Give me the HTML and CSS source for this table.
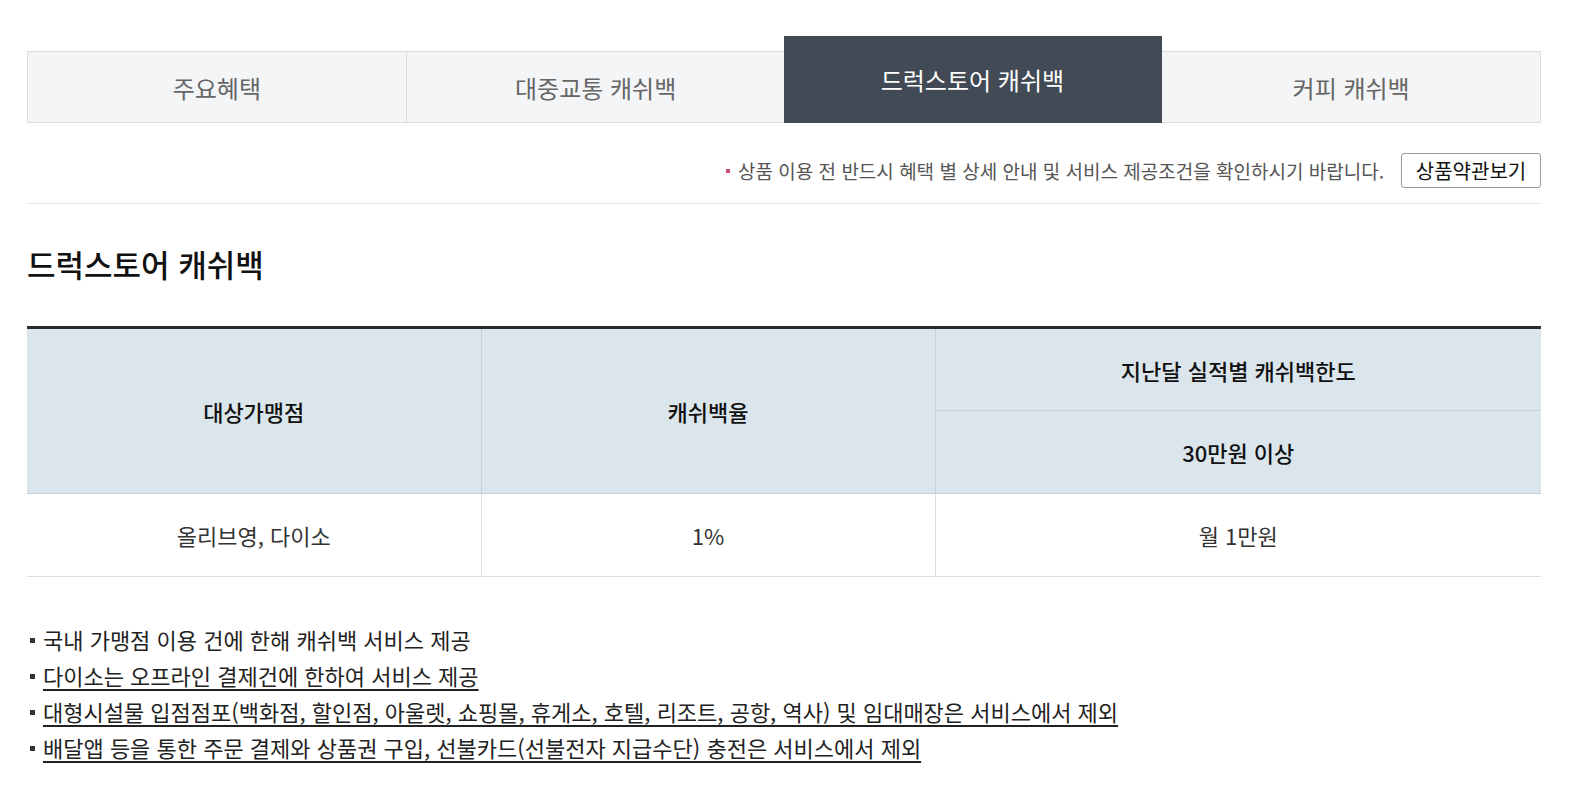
FILE: index.html
```html
<!DOCTYPE html>
<html lang="ko">
<head>
<meta charset="utf-8">
<title>드럭스토어 캐쉬백</title>
<link rel="stylesheet" href="styles.css">
</head>
<body>
<div class="wrap">
  <ul class="tabs">
    <li class="tab">주요혜택</li>
    <li class="tab">대중교통 캐쉬백</li>
    <li class="tab active">드럭스토어 캐쉬백</li>
    <li class="tab">커피 캐쉬백</li>
  </ul>

  <div class="notice-row">
    <p class="notice"><span class="dot"></span>상품 이용 전 반드시 혜택 별 상세 안내 및 서비스 제공조건을 확인하시기 바랍니다.</p>
    <button class="terms-btn" type="button">상품약관보기</button>
  </div>

  <h2 class="title">드럭스토어 캐쉬백</h2>

  <table class="benefit">
    <colgroup>
      <col class="c1"><col class="c2"><col class="c3">
    </colgroup>
    <thead>
      <tr>
        <th rowspan="2">대상가맹점</th>
        <th rowspan="2">캐쉬백율</th>
        <th>지난달 실적별 캐쉬백한도</th>
      </tr>
      <tr>
        <th>30만원 이상</th>
      </tr>
    </thead>
    <tbody>
      <tr>
        <td>올리브영, 다이소</td>
        <td>1%</td>
        <td>월 1만원</td>
      </tr>
    </tbody>
  </table>

  <ul class="notes">
    <li>국내 가맹점 이용 건에 한해 캐쉬백 서비스 제공</li>
    <li><u>다이소는 오프라인 결제건에 한하여 서비스 제공</u></li>
    <li><u>대형시설물 입점점포(백화점, 할인점, 아울렛, 쇼핑몰, 휴게소, 호텔, 리조트, 공항, 역사) 및 임대매장은 서비스에서 제외</u></li>
    <li><u>배달앱 등을 통한 주문 결제와 상품권 구입, 선불카드(선불전자 지급수단) 충전은 서비스에서 제외</u></li>
  </ul>
</div>
</body>
</html>
```

FILE: styles.css
```css
* { box-sizing: border-box; }
html, body { margin: 0; padding: 0; background: #fff; }
body {
  font-family: "Noto Sans CJK KR", "Noto Sans", sans-serif;
  color: #222;
}
.wrap {
  padding: 36px 28px 0 27px;
}
.tabs {
  list-style: none;
  margin: 0;
  padding: 0;
  display: flex;
  align-items: flex-end;
}
.tab {
  flex: 1 1 0;
  height: 72px;
  display: flex;
  align-items: center;
  justify-content: center;
  background: #f4f5f7;
  border: 1px solid #dcdcdc;
  border-left: none;
  font-size: 24px;
  color: #666;
}
.tab:first-child { border-left: 1px solid #dcdcdc; }
.tab.active {
  height: 87px;
  margin-left: -2px;
  background: #414a55;
  border-color: #414a55;
  color: #fff;
}
.notice-row {
  display: flex;
  justify-content: flex-end;
  align-items: center;
  gap: 17px;
  margin-top: 30px;
  padding-bottom: 15px;
  border-bottom: 1px solid #e3e3e3;
}
.notice {
  margin: 0;
  font-size: 19px;
  color: #555;
  display: flex;
  align-items: center;
}
.dot {
  width: 4px;
  height: 4px;
  background: #c9506c;
  margin-right: 8px;
}
.terms-btn {
  height: 35px;
  padding: 0;
  background: #fff;
  border: 1px solid #9a9a9a;
  border-radius: 3px;
  font-family: inherit;
  font-size: 20px;
  color: #111;
  width: 140px;
}
.title {
  margin: 40px 0 0;
  font-size: 31px;
  line-height: 40px;
  font-weight: 500;
  color: #111;
}
.benefit {
  width: 100%;
  margin-top: 42px;
  border-collapse: collapse;
  border-top: 3px solid #2a2c30;
  table-layout: fixed;
}
.benefit .c1, .benefit .c2 { width: 454px; }
.benefit th {
  background: #dbe5ec;
  font-size: 22px;
  font-weight: 500;
  color: #111;
  height: 83px;
  border: 1px solid #c6d0d7;
}
.benefit td {
  height: 83px;
  text-align: center;
  font-size: 22px;
  color: #333;
  border: 1px solid #dedede;
}
.benefit tr > :first-child { border-left: none; }
.benefit tr > :last-child { border-right: none; }
.benefit thead tr:first-child th { border-top: none; }
.notes {
  list-style: none;
  margin: 44px 0 0;
  padding: 0;
}
.notes li {
  position: relative;
  padding-left: 16px;
  font-size: 22px;
  line-height: 36px;
  color: #222;
}
.notes li::before {
  content: "";
  position: absolute;
  left: 3px;
  top: 17px;
  width: 5px;
  height: 5px;
  background: #333;
}
.notes u {
  text-underline-offset: 4px;
  text-decoration-thickness: 2px;
}
```
